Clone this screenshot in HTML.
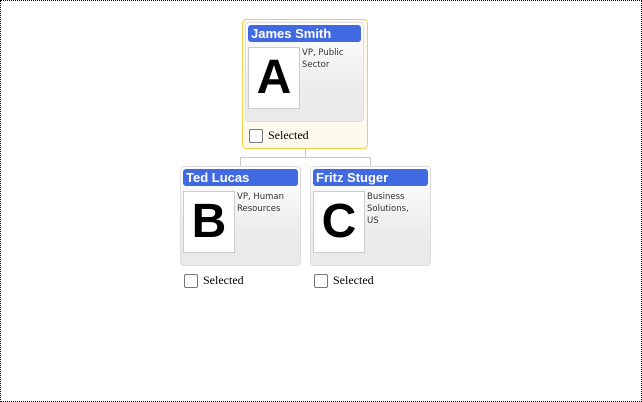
<!DOCTYPE html>
<html><head><style>
body{margin:0;width:642px;height:402px;position:relative;overflow:hidden;background:#fff;font-family:"DejaVu Sans","Liberation Sans",sans-serif}
.frame{position:absolute;left:0;top:0;width:640px;height:400px;border:1px dotted #000}
.sel{position:absolute;left:242px;top:19px;width:124px;height:128px;border:1px solid #f5d04a;border-radius:4px;background:#fdf9ec}
.card{position:absolute;width:119px;height:100px;border:1px solid #ddd;border-radius:4px;background:linear-gradient(#fff,#ebebeb 70%,#eaeaea);box-sizing:border-box}
.hd{position:absolute;left:2px;top:2px;right:2px;height:17px;background:#4169e1;border-radius:3px;color:#fff;font-family:"Liberation Sans",sans-serif;font-weight:bold;font-size:13px;line-height:18px;padding-left:3px}
.ph{position:absolute;left:2px;top:24px;width:50px;height:60px;background:#fff;border:1px solid #ccc;font-family:"Liberation Sans",sans-serif;font-weight:bold;font-size:48px;line-height:60px;text-align:center;color:#000}
.tx{position:absolute;left:56px;top:24px;font-size:8.5px;line-height:12px;color:#333}
.cb{position:absolute;width:12px;height:12px;border:1px solid #777;border-radius:2px;background:#fff}
.lb{position:absolute;font-family:"Liberation Serif",serif;font-size:12px;color:#000}
.ln{position:absolute;background:#c8c8c8}
</style></head><body>
<div class="frame"></div>
<div class="sel"></div>
<div class="card" style="left:245px;top:22px"><div class="hd">James Smith</div><div class="ph">A</div><div class="tx">VP, Public<br>Sector</div></div>
<div class="cb" style="left:249px;top:129px"></div><div class="lb" style="left:268px;top:128px">Selected</div>
<div class="ln" style="left:305px;top:148px;width:1px;height:9px"></div>
<div class="ln" style="left:240px;top:157px;width:131px;height:1px"></div>
<div class="ln" style="left:240px;top:157px;width:1px;height:9px"></div>
<div class="ln" style="left:370px;top:157px;width:1px;height:9px"></div>
<div class="card" style="left:180px;top:166px;width:121px"><div class="hd">Ted Lucas</div><div class="ph">B</div><div class="tx">VP, Human<br>Resources</div></div>
<div class="card" style="left:310px;top:166px;width:121px"><div class="hd">Fritz Stuger</div><div class="ph">C</div><div class="tx">Business<br>Solutions,<br>US</div></div>
<div class="cb" style="left:184px;top:274px"></div><div class="lb" style="left:203px;top:273px">Selected</div>
<div class="cb" style="left:314px;top:274px"></div><div class="lb" style="left:333px;top:273px">Selected</div>
</body></html>
